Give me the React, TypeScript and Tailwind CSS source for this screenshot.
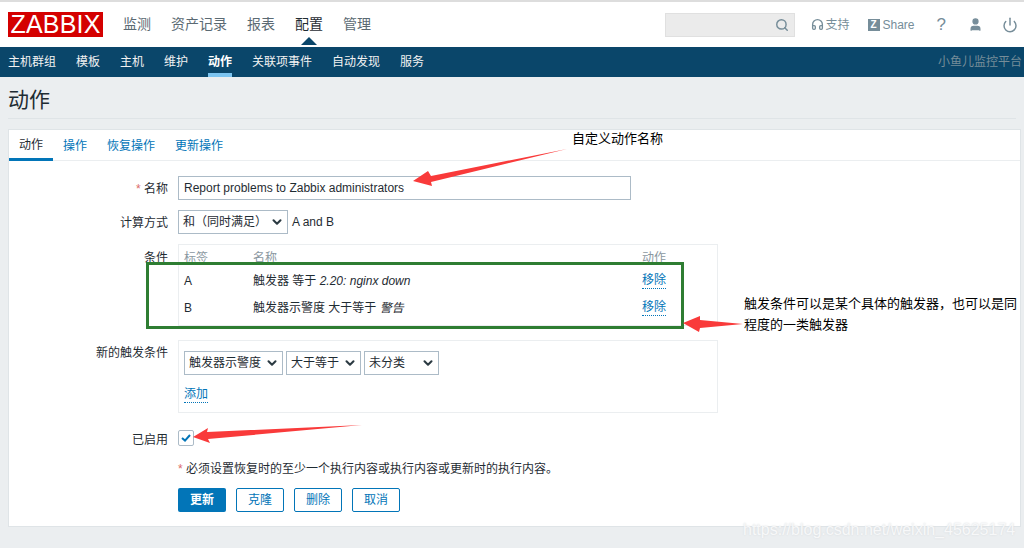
import { Headphones, Search, User, Power, ChevronDown } from "lucide-react";

const TOP_NAV = ["监测", "资产记录", "报表", "配置", "管理"];
const SUB_NAV = ["主机群组", "模板", "主机", "维护", "动作", "关联项事件", "自动发现", "服务"];
const TABS = ["动作", "操作", "恢复操作", "更新操作"];
const FONT = "font-['Liberation_Sans','Noto_Sans_CJK_SC',sans-serif]";

function FakeSelect({ label, width }: { label: string; width: string }) {
  return (
    <div className={`flex h-6 items-center justify-between border border-[#acbbc7] bg-white pl-[4px] pr-[3px] text-[#1f2c33] ${width}`}>
      <span>{label}</span>
      <ChevronDown size={14} strokeWidth={3.5} className="text-[#2b3a42]" />
    </div>
  );
}

function Row({ label, required, className, labelClass, children }: {
  label: string;
  required?: boolean;
  className?: string;
  labelClass?: string;
  children: React.ReactNode;
}) {
  return (
    <div className={`flex items-start gap-[10px] ${className ?? ""}`}>
      <div className={`w-[159px] shrink-0 text-right text-[#1f2c33] ${labelClass ?? ""}`}>
        {required && <span className="text-[#dc6a6a]">* </span>}
        {label}
      </div>
      {children}
    </div>
  );
}

function Condition({ tag, name, italic }: { tag: string; name: string; italic: string }) {
  return (
    <div className="flex h-[27px] items-center text-[#1f2c33]">
      <div className="w-[74px] pl-[5px]">{tag}</div>
      <div className="w-[389px]">
        {name} <i>{italic}</i>
      </div>
      <div className="border-b border-dotted border-[#0275b8] leading-[15px] text-[#0275b8]">移除</div>
    </div>
  );
}

export default function App() {
  return (
    <div className={`relative h-[548px] w-[1024px] overflow-hidden bg-[#ebeef0] text-[12px] ${FONT}`}>
      {/* top bar */}
      <header className="flex h-[47px] items-center border-t-2 border-[#dddddd] bg-white pl-2 pr-[6px]">
        <div className="flex h-[25px] w-[95px] items-center justify-center bg-[#d40000] text-[25px] leading-none tracking-[0.2px] text-white">
          ZABBIX
        </div>
        <nav className="ml-5 flex gap-5 text-[14px] text-[#5b6a73]">
          {TOP_NAV.map((item) => (
            <div key={item} className={item === "配置" ? "relative text-[#1f2c33]" : ""}>
              {item}
              {item === "配置" && (
                <div className="absolute left-[6px] top-[23px] size-0 border-x-[8px] border-b-[8px] border-x-transparent border-b-[#0a466a]" />
              )}
            </div>
          ))}
        </nav>
        <div className="ml-auto flex h-6 w-[130px] items-center justify-end border border-[#e0e0e0] bg-[#ebebeb] pr-[5px]">
          <Search size={14} strokeWidth={2.5} className="text-[#768d99]" />
        </div>
        <div className="ml-[16px] flex items-center gap-[1px] text-[#768d99]">
          <Headphones size={13} strokeWidth={2.5} />
          <span>支持</span>
        </div>
        <div className="ml-[18px] flex items-center gap-[3px] text-[#768d99]">
          <div className="flex size-3 items-center justify-center bg-[#768d99] text-[10px] font-bold leading-none text-white">Z</div>
          <span>Share</span>
        </div>
        <div className="ml-[22px] text-[17px] leading-none text-[#768d99]">?</div>
        <User size={15} fill="#768d99" strokeWidth={2} className="ml-[22px] text-[#768d99]" />
        <Power size={16} strokeWidth={2.2} className="ml-[19px] text-[#768d99]" />
      </header>

      {/* sub nav */}
      <div className="flex h-[30px] items-center justify-between bg-[#0a466a] pl-2 pr-[2px]">
        <nav className="flex h-full gap-5 text-[#f2f2f2]">
          {SUB_NAV.map((item) => (
            <div
              key={item}
              className={`flex h-full items-center ${item === "动作" ? "border-b-4 border-[#7cc4f0] pt-[4px] font-bold text-white" : ""}`}
            >
              {item}
            </div>
          ))}
        </nav>
        <div className="text-[#768d99]">小鱼儿监控平台</div>
      </div>

      {/* title */}
      <div className="mx-2 h-[42px] border-b border-[#dfe4e7] pt-[10px] text-[21px] leading-[26px] text-[#1f2c33]">动作</div>

      {/* card */}
      <div className="ml-2 mr-[3px] mt-[10px] h-[398px] border border-[#dfe4e7] bg-white">
        <div className="flex h-[31px] border-b border-[#ebeef0]">
          {TABS.map((tab, i) => (
            <div
              key={tab}
              className={`-mb-px flex items-center px-[10px] pt-px ${i === 0 ? "border-b-[3px] border-[#0275b8] text-[#1f2c33]" : "text-[#0275b8]"}`}
            >
              {tab}
            </div>
          ))}
        </div>

        <div className="pt-[15px]">
          <Row label="名称" required labelClass="pt-[4px]">
            <div className="flex h-6 w-[453px] items-center border border-[#acbbc7] pl-[5px] text-[#1f2c33]">
              Report problems to Zabbix administrators
            </div>
          </Row>

          <Row label="计算方式" className="mt-[10px]" labelClass="pt-[4px]">
            <div className="flex items-center gap-1">
              <FakeSelect label="和（同时满足）" width="w-[110px]" />
              <span className="text-[#1f2c33]">A and B</span>
            </div>
          </Row>

          <Row label="条件" className="mt-[10px]" labelClass="pt-[5px]">
            <div className="h-[82px] w-[540px] border border-[#ebeef0] pt-[4px]">
              <div className="flex h-[17px] items-center text-[#8a979f]">
                <div className="w-[74px] pl-[5px]">标签</div>
                <div className="w-[389px]">名称</div>
                <div>动作</div>
              </div>
              <div className="mt-[1px]">
                <Condition tag="A" name="触发器 等于" italic="2.20: nginx down" />
                <Condition tag="B" name="触发器示警度 大于等于" italic="警告" />
              </div>
            </div>
          </Row>

          <Row label="新的触发条件" className="mt-[14px]" labelClass="pt-[4px]">
            <div className="h-[73px] w-[540px] border border-[#ebeef0] pl-[5px] pt-[10px]">
              <div className="flex gap-[3px]">
                <FakeSelect label="触发器示警度" width="w-[99px]" />
                <FakeSelect label="大于等于" width="w-[75px]" />
                <FakeSelect label="未分类" width="w-[75px]" />
              </div>
              <div className="mt-[12px] inline-block border-b border-dotted border-[#0275b8] leading-[15px] text-[#0275b8]">添加</div>
            </div>
          </Row>

          <Row label="已启用" className="mt-[17px]" labelClass="pt-px">
            <div className="flex size-4 items-center justify-center rounded-[2px] border border-[#acbbc7]">
              <svg width="10" height="8" viewBox="0 0 10 8" fill="none">
                <path d="M1 4l3 2.6L9 1" stroke="#0275b8" strokeWidth="2" />
              </svg>
            </div>
          </Row>

          <div className="ml-[169px] mt-[11px] text-[#1f2c33]">
            <span className="text-[#dc6a6a]">* </span>
            必须设置恢复时的至少一个执行内容或执行内容或更新时的执行内容。
          </div>

          <div className="ml-[169px] mt-[10px] flex gap-[10px]">
            <div className="flex h-6 w-12 items-center justify-center rounded-[2px] bg-[#0275b8] font-bold text-white">更新</div>
            {["克隆", "删除", "取消"].map((b) => (
              <div key={b} className="flex h-6 w-12 items-center justify-center rounded-[2px] border border-[#0275b8] text-[#0275b8]">
                {b}
              </div>
            ))}
          </div>
        </div>
      </div>

      {/* annotations drawn on top of the screenshot */}
      <svg className="absolute inset-0" width="1024" height="548" viewBox="0 0 1024 548">
        <rect x="147.5" y="263.5" width="535" height="64" fill="none" stroke="#2e7d32" strokeWidth="3" />
        <polygon points="567,149 431,176 428,171 413,181 432,186 431,182" fill="#f93a3a" />
        <polygon points="743,324 700,320 700,316 683,323 699,332 700,328" fill="#f93a3a" />
        <polygon points="362,425 207,432 208,428 193,437 210,443 208,439" fill="#f93a3a" />
      </svg>
      <div className="absolute left-[572px] top-[130px] text-[13px] leading-[18px] text-black">自定义动作名称</div>
      <div className="absolute left-[744px] top-[293px] w-[276px] text-[13px] leading-[21px] text-black">
        触发条件可以是某个具体的触发器，也可以是同程度的一类触发器
      </div>
      <div className="absolute left-[743px] top-[520px] text-[16px] leading-[20px] text-[#f7f8f9] [text-shadow:0_0_2px_#d2d6d9]">
        https://blog.csdn.net/weixin_45625174
      </div>
    </div>
  );
}
